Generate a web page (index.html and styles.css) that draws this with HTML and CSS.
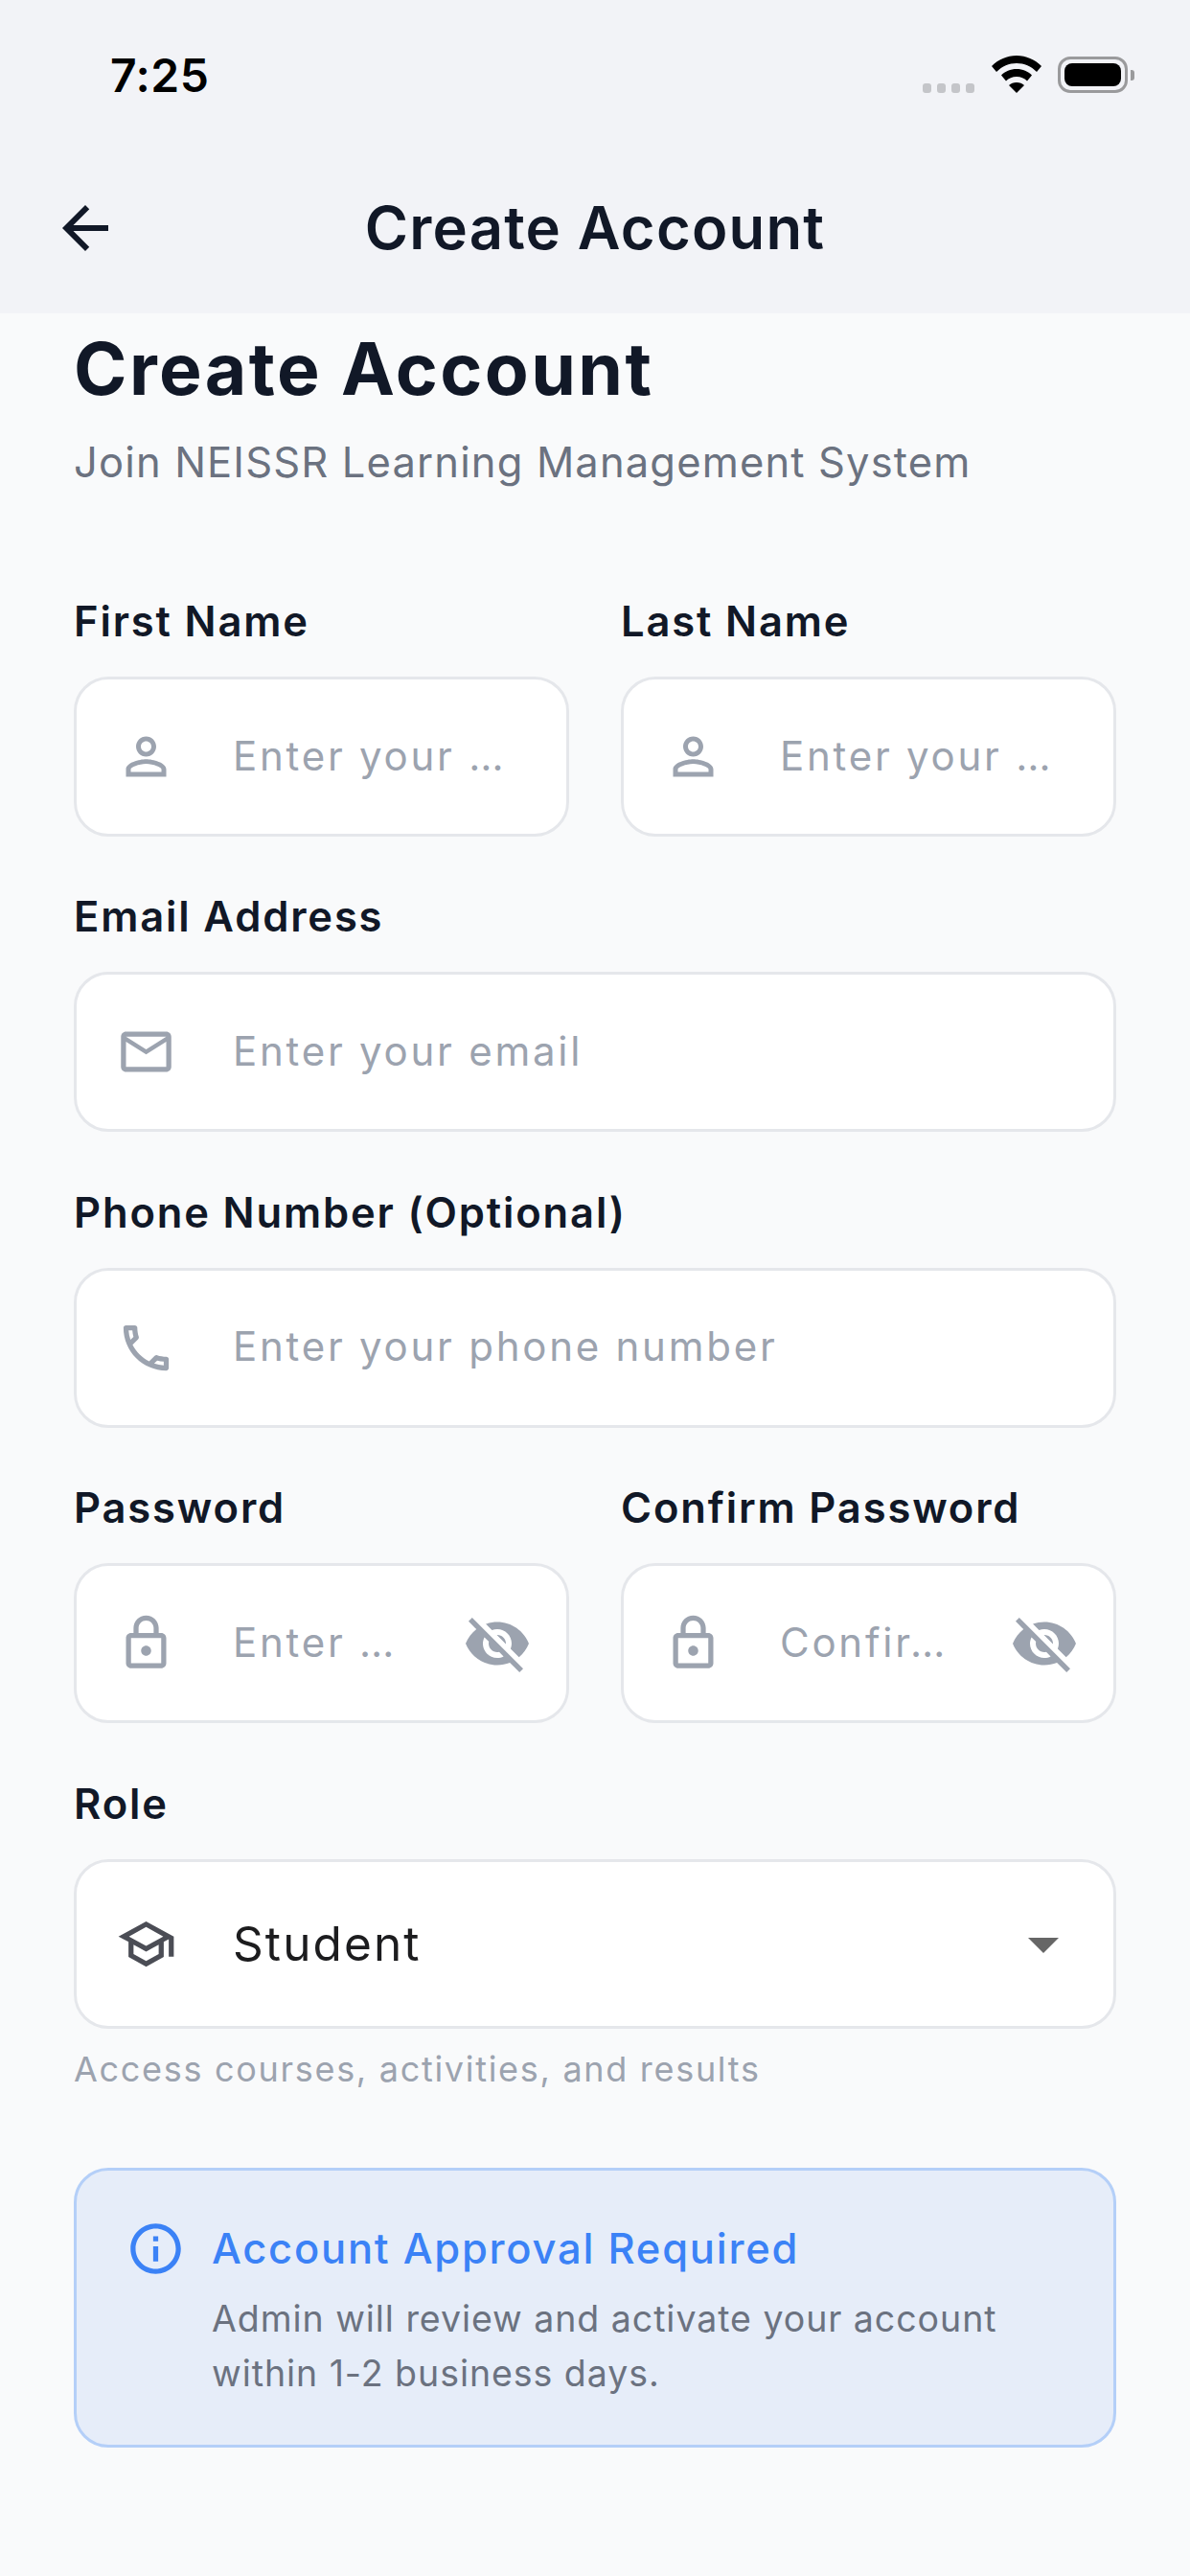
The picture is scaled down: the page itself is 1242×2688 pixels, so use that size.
FILE: index.html
```html
<!DOCTYPE html>
<html lang="en">
<head>
<meta charset="utf-8">
<title>Create Account</title>
<link rel="stylesheet" href="styles.css">
</head>
<body>
<svg class="defs" width="0" height="0" aria-hidden="true">
  <symbol id="i-person" viewBox="0 0 24 24"><path d="M12 5.9c1.16 0 2.1.94 2.1 2.1s-.94 2.1-2.1 2.1S9.9 9.16 9.9 8s.94-2.1 2.1-2.1m0 9c2.97 0 6.1 1.46 6.1 2.1v1.1H5.9V17c0-.64 3.13-2.1 6.1-2.1M12 4C9.79 4 8 5.79 8 8s1.79 4 4 4 4-1.79 4-4-1.79-4-4-4zm0 9c-2.67 0-8 1.34-8 4v3h16v-3c0-2.66-5.33-4-8-4z"/></symbol>
  <symbol id="i-mail" viewBox="0 0 24 24"><path d="M20 4H4c-1.1 0-1.99.9-1.99 2L2 18c0 1.1.9 2 2 2h16c1.1 0 2-.9 2-2V6c0-1.1-.9-2-2-2zm0 14H4V8l8 5 8-5v10zm-8-7L4 6h16l-8 5z"/></symbol>
  <symbol id="i-phone" viewBox="0 0 24 24"><path d="M6.54 5c.06.89.21 1.76.45 2.59l-1.2 1.2c-.41-1.2-.67-2.47-.76-3.79h1.51m9.86 12.02c.85.24 1.72.39 2.6.45v1.49c-1.32-.09-2.59-.35-3.8-.75l1.2-1.19M7.5 3H4c-.55 0-1 .45-1 1 0 9.39 7.61 17 17 17 .55 0 1-.45 1-1v-3.49c0-.55-.45-1-1-1-1.24 0-2.45-.2-3.57-.57-.1-.04-.21-.05-.31-.05-.26 0-.51.1-.71.29l-2.2 2.2c-2.83-1.45-5.15-3.76-6.59-6.59l2.2-2.2c.28-.28.36-.67.25-1.02C8.7 6.45 8.5 5.25 8.5 4c0-.55-.45-1-1-1z"/></symbol>
  <symbol id="i-lock" viewBox="0 0 24 24"><path d="M18 8h-1V6c0-2.76-2.24-5-5-5S7 3.24 7 6v2H6c-1.1 0-2 .9-2 2v10c0 1.1.9 2 2 2h12c1.1 0 2-.9 2-2V10c0-1.1-.9-2-2-2zM9 6c0-1.66 1.34-3 3-3s3 1.34 3 3v2H9V6zm9 14H6V10h12v10zm-6-3c1.1 0 2-.9 2-2s-.9-2-2-2-2 .9-2 2 .9 2 2 2z"/></symbol>
  <symbol id="i-eye-off" viewBox="0 0 24 24"><path d="M12 7c2.76 0 5 2.24 5 5 0 .65-.13 1.26-.36 1.83l2.92 2.92c1.51-1.26 2.7-2.89 3.43-4.75-1.73-4.39-6-7.5-11-7.5-1.4 0-2.74.25-3.98.7l2.16 2.16C10.74 7.13 11.35 7 12 7zM2 4.27l2.28 2.28.46.46C3.08 8.3 1.78 10.02 1 12c1.73 4.39 6 7.5 11 7.5 1.55 0 3.03-.3 4.38-.84l.42.42L19.73 22 21 20.73 3.27 3 2 4.27zM7.53 9.8l1.55 1.55c-.05.21-.08.43-.08.65 0 1.66 1.34 3 3 3 .22 0 .44-.03.65-.08l1.55 1.55c-.67.33-1.41.53-2.2.53-2.76 0-5-2.24-5-5 0-.79.2-1.53.53-2.2zm4.31-.78l3.15 3.15.02-.16c0-1.66-1.34-3-3-3l-.17.01z"/></symbol>
</svg>

<header class="top">
  <div class="status">
    <span class="time">7:25</span>
    <div class="status-icons">
      <div class="signal"><i></i><i></i><i></i><i></i></div>
      <svg class="wifi" viewBox="0 0 52 39"><path d="M26 0C16 0 7 4 0 11l5 6c6-6 13-9 21-9s15 3 21 9l5-6C45 4 36 0 26 0z"/><path d="M26 14c-6.500 0-12 2.500-16 6.500l5 6c3-3 6.500-4.500 11-4.500s8 1.500 11 4.500l5-6c-4-4-9.500-6.500-16-6.500z"/><path d="M26 28c-3.200 0-6 1.200-8 3l8 8 8-8c-2-1.800-4.800-3-8-3z"/></svg>
      <div class="battery"><div class="battery-fill"></div></div>
      <div class="battery-nub"></div>
    </div>
  </div>
  <div class="nav">
    <svg class="back" viewBox="0 0 24 24"><path d="M20 11H7.830l5.590-5.590L12 4l-8 8 8 8 1.410-1.410L7.830 13H20v-2z"/></svg>
    <div class="nav-title">Create Account</div>
  </div>
</header>

<main class="page">
  <h1 class="title">Create Account</h1>
  <p class="subtitle">Join NEISSR Learning Management System</p>

  <form class="form">
    <div class="row">
      <div class="field">
        <div class="label">First Name</div>
        <div class="input"><svg class="icon"><use href="#i-person"/></svg><span class="ph">Enter your …</span></div>
      </div>
      <div class="field">
        <div class="label">Last Name</div>
        <div class="input"><svg class="icon"><use href="#i-person"/></svg><span class="ph">Enter your …</span></div>
      </div>
    </div>
    <div class="field">
      <div class="label">Email Address</div>
      <div class="input"><svg class="icon"><use href="#i-mail"/></svg><span class="ph">Enter your email</span></div>
    </div>
    <div class="field">
      <div class="label">Phone Number (Optional)</div>
      <div class="input"><svg class="icon"><use href="#i-phone"/></svg><span class="ph">Enter your phone number</span></div>
    </div>
    <div class="row">
      <div class="field">
        <div class="label">Password</div>
        <div class="input"><svg class="icon"><use href="#i-lock"/></svg><span class="ph">Enter …</span><svg class="eye"><use href="#i-eye-off"/></svg></div>
      </div>
      <div class="field">
        <div class="label">Confirm Password</div>
        <div class="input"><svg class="icon"><use href="#i-lock"/></svg><span class="ph">Confir…</span><svg class="eye"><use href="#i-eye-off"/></svg></div>
      </div>
    </div>
    <div class="field">
      <div class="label">Role</div>
      <div class="input select">
        <svg class="icon dark" viewBox="0 0 24 24"><path d="M12 3L1 9l4 2.180v6L12 21l7-3.820v-6l2-1.090V17h2V9L12 3zm6.820 6L12 12.720 5.180 9 12 5.280 18.820 9zM17 15.990l-5 2.730-5-2.730v-3.720L12 15l5-2.730v3.720z"/></svg>
        <span class="value">Student</span>
        <span class="caret"></span>
      </div>
      <div class="helper">Access courses, activities, and results</div>
    </div>
  </form>

  <section class="notice">
    <div class="notice-head">
      <svg class="notice-icon" viewBox="0 0 24 24"><path d="M11 7h2v2h-2zm0 4h2v6h-2zm1-9C6.480 2 2 6.480 2 12s4.480 10 10 10 10-4.480 10-10S17.520 2 12 2zm0 18c-4.410 0-8-3.590-8-8s3.590-8 8-8 8 3.590 8 8-3.590 8-8 8z"/></svg>
      <div class="notice-title">Account Approval Required</div>
    </div>
    <p class="notice-text">Admin will review and activate your account<br>within 1-2 business days.</p>
  </section>
</main>
</body>
</html>
```

FILE: styles.css
```css
* { box-sizing: border-box; }
html, body { margin: 0; padding: 0; }
body {
  width: 1242px;
  height: 2688px;
  overflow: hidden;
  background: #f9fafb;
  font-family: Inter, "Liberation Sans", sans-serif;
  color: #111827;
}
.defs { position: absolute; }

.top { height: 327px; background: #f2f3f7; }
.status {
  height: 134px;
  padding: 52px 58px 0 115px;
  display: flex;
  justify-content: space-between;
}
.time { font-size: 48px; line-height: 54px; font-weight: 600; color: #000; letter-spacing: .5px; }
.status-icons { display: flex; align-items: flex-start; padding-top: 6px; }
.signal { display: flex; gap: 6px; margin-top: 29px; margin-right: 18px; }
.signal i { display: block; width: 9px; height: 10px; border-radius: 3px; background: #c4c5c9; }
.wifi { width: 52px; height: 39px; fill: #000; margin-right: 17px; }
.battery {
  width: 73px; height: 38px; padding: 4px;
  border: 3px solid #9a9a9c; border-radius: 13px;
  margin-top: 1px;
}
.battery-fill { width: 100%; height: 100%; background: #000; border-radius: 8px; }
.battery-nub {
  width: 4px; height: 11px; margin: 15px 0 0 3px;
  background: #9a9a9c; border-radius: 0 3px 3px 0;
}
.nav { position: relative; height: 193px; padding-top: 71px; display: flex; align-items: flex-start; justify-content: center; }
.nav-title { font-size: 61.5px; line-height: 66px; font-weight: 600; letter-spacing: 1.2px; }
.back { position: absolute; left: 53px; top: 68px; width: 72px; height: 72px; fill: #111827; }

.page { padding: 16px 77px 0; }
.title { margin: 0; font-size: 75px; line-height: 84px; font-weight: 700; letter-spacing: 2.4px; }
.subtitle { margin: 25px 0 0; font-size: 43.5px; line-height: 60px; color: #6b7280; letter-spacing: 1.15px; }

.form { margin-top: 111px; display: flex; flex-direction: column; gap: 58.4px; }
.row { display: grid; grid-template-columns: 517px 517px; gap: 54px; }
.label { font-size: 43.5px; line-height: 50px; font-weight: 600; margin-bottom: 33px; letter-spacing: 1.85px; }
.input {
  height: 167px;
  display: flex;
  align-items: center;
  padding: 0 36px 0 41px;
  background: #fff;
  border: 3px solid #e5e7eb;
  border-radius: 36px;
}
.icon { flex: none; width: 63px; height: 63px; fill: #9ca3af; margin-right: 59px; }
.icon.dark { fill: #4b4d55; }
.ph { flex: 1; margin-bottom: 3px; font-size: 42px; color: #9ca3af; white-space: nowrap; letter-spacing: 2.75px; }
.eye { flex: none; width: 72px; height: 72px; fill: #9ca3af; }
.select { height: 177px; }
.value { flex: 1; font-size: 49.5px; color: #1c1c1e; letter-spacing: 2.1px; }
.caret {
  width: 0; height: 0; margin: 4px 21px 0 0;
  border-left: 16px solid transparent;
  border-right: 16px solid transparent;
  border-top: 16px solid #666;
}
.helper { margin-top: 20px; font-size: 36px; line-height: 44px; color: #9ca3af; letter-spacing: 1.7px; }

.notice {
  margin-top: 81px;
  height: 292px;
  padding: 50px 51px 0;
  background: #e6edf9;
  border: 3px solid #b4cff8;
  border-radius: 36px;
}
.notice-head { display: flex; align-items: center; gap: 27px; }
.notice-icon { flex: none; width: 63px; height: 63px; fill: #3b82f6; }
.notice-title { font-size: 43.5px; font-weight: 500; color: #3b82f6; letter-spacing: 1.75px; }
.notice-text { margin: 13px 0 0 90px; font-size: 37.5px; line-height: 57px; color: #6b7280; letter-spacing: .95px; }
```
